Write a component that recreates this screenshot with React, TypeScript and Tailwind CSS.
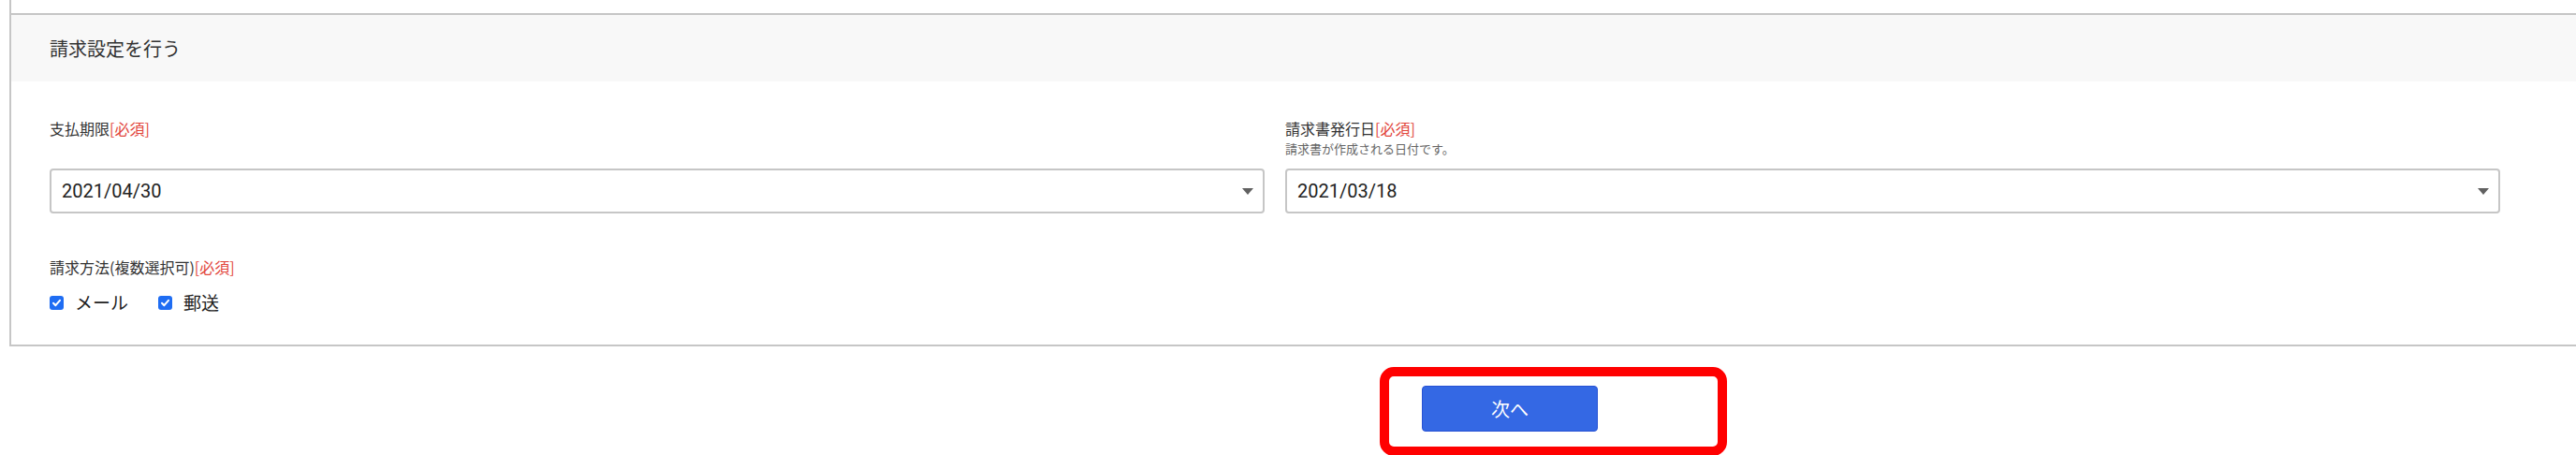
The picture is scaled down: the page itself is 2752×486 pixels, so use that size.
import React from "react";

const jp = { fontFamily: '"Noto Sans CJK JP", "Noto Sans", sans-serif' };
const num = { fontFamily: 'Roboto, "Noto Sans CJK JP", sans-serif' };

const Required = () => <span className="text-[#e2463c]">[必須]</span>;

const SelectBox = ({ value }: { value: string }) => (
  <div className="flex h-[48px] items-center justify-between rounded-[4px] border-2 border-[#c6c6c6] bg-white pl-[11px] pr-[10px]">
    <span className="text-[20px] text-[#222]" style={num}>
      {value}
    </span>
    <svg width="12" height="7" viewBox="0 0 12 7">
      <path d="M0 0 L12 0 L6 7 Z" fill="#616161" />
    </svg>
  </div>
);

const Check = ({ label }: { label: string }) => (
  <label className="flex items-center gap-[12px]">
    <span className="flex h-[15px] w-[15px] items-center justify-center rounded-[3px] bg-[#1f6df3]">
      <svg width="11" height="11" viewBox="0 0 11 11">
        <path d="M2 5.8 L4.4 8.2 L9 2.8" fill="none" stroke="#fff" strokeWidth="2" strokeLinecap="round" strokeLinejoin="round" />
      </svg>
    </span>
    <span className="text-[19px] leading-[28px] text-[#222]">{label}</span>
  </label>
);

export default function App() {
  return (
    <div className="h-[486px] w-[2752px] overflow-hidden bg-white" style={jp}>
      {/* card */}
      <div className="ml-[10px] border-b-2 border-l-2 border-[#c6c6c6] pt-[14px]">
        <div className="border-t-2 border-[#c6c6c6]">
          <div className="flex h-[71px] items-center bg-[#f8f8f8] pl-[41px]">
            <h2 className="text-[20px] text-[#333]">請求設定を行う</h2>
          </div>

          <div className="pb-[31px] pl-[41px] pt-[38px]">
            <div className="grid grid-cols-[1298px_1298px] gap-[22px]">
              <div className="flex flex-col">
                <div className="text-[16px] leading-[24px] text-[#333]">
                  支払期限<Required />
                </div>
                <div className="h-[19px]" />
                <div className="mt-[12px]">
                  <SelectBox value="2021/04/30" />
                </div>
              </div>
              <div className="flex flex-col">
                <div className="text-[16px] leading-[24px] text-[#333]">
                  請求書発行日<Required />
                </div>
                <div className="h-[19px] text-[13px] leading-[19px] text-[#666]">請求書が作成される日付です。</div>
                <div className="mt-[12px]">
                  <SelectBox value="2021/03/18" />
                </div>
              </div>
            </div>

            <div className="mt-[45px] text-[16px] leading-[24px] text-[#333]">
              請求方法(複数選択可)<Required />
            </div>
            <div className="mt-[12px] flex items-center gap-[32px]">
              <Check label="メール" />
              <Check label="郵送" />
            </div>
          </div>
        </div>
      </div>

      {/* next button with red highlight */}
      <div className="ml-[1474px] mt-[22px] w-[371px] rounded-[15px] border-[10px] border-[#ff0000] pb-[16px] pl-[35px] pt-[10px]">
        <button className="flex h-[49px] w-[188px] items-center justify-center rounded-[4px] border border-[#2752d4] bg-[#3468e4] text-[20px] text-white">
          次へ
        </button>
      </div>
    </div>
  );
}
